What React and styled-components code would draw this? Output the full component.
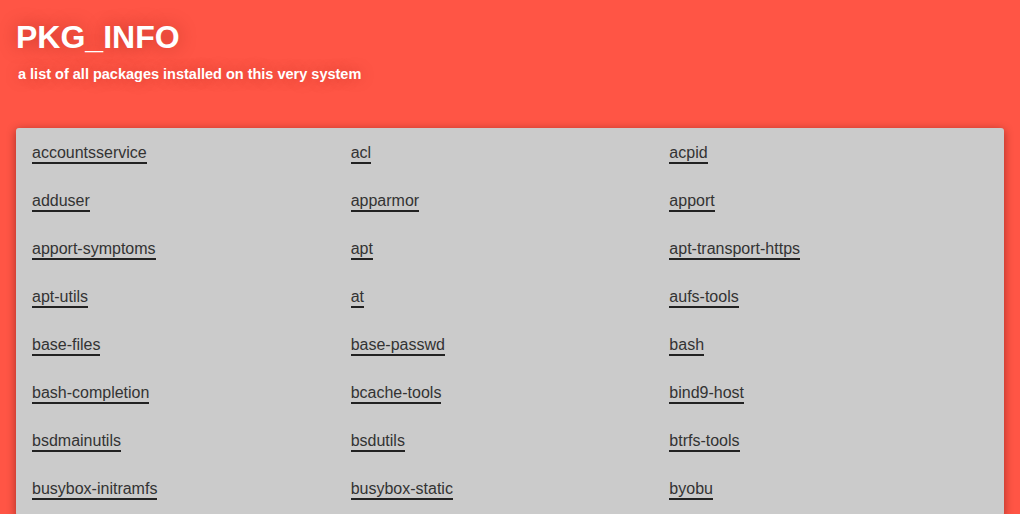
import React from "react";
import styled, { createGlobalStyle } from "styled-components";

// package list, as printed by dpkg
const packages = [
  "accountsservice", "acl", "acpid",
  "adduser", "apparmor", "apport",
  "apport-symptoms", "apt", "apt-transport-https",
  "apt-utils", "at", "aufs-tools",
  "base-files", "base-passwd", "bash",
  "bash-completion", "bcache-tools", "bind9-host",
  "bsdmainutils", "bsdutils", "btrfs-tools",
  "busybox-initramfs", "busybox-static", "byobu",
];

// styles
const GlobalStyle = createGlobalStyle`
  html, body {
    margin: 0;
    padding: 0;
    background: #ffffff;
  }
  body {
    font-family: "Liberation Sans", Arial, sans-serif;
  }
`;

const Page = styled.div`
  margin-right: 7px;
  min-height: 100vh;
  background: #ff5545;
  padding-bottom: 32px;
  box-sizing: border-box;
`;

const Header = styled.header`
  padding: 19px 16px 0 16px;
  height: 128px;
  box-sizing: border-box;
`;

const Title = styled.h1`
  margin: 0;
  font-size: 32px;
  line-height: 37px;
  font-weight: 700;
  color: #ffffff;
  text-shadow: 0 0 18px rgba(120, 20, 10, 0.45);
`;

const Subtitle = styled.p`
  margin: 10px 0 0 2px;
  font-size: 14.5px;
  line-height: 16px;
  font-weight: 700;
  color: #ffffff;
  text-shadow: 0 0 14px rgba(120, 20, 10, 0.35);
`;

const Card = styled.main`
  margin: 0 16px;
  padding: 16px;
  background: #cbcbcb;
  border-radius: 3px;
  box-shadow: 0 2px 10px rgba(60, 0, 0, 0.45);
  display: grid;
  grid-template-columns: repeat(3, 1fr);
  row-gap: 28px;
`;

const Cell = styled.div`
  min-width: 0;
`;

const PkgLink = styled.a`
  display: inline-block;
  font-size: 16px;
  line-height: 18px;
  color: #333333;
  text-decoration: none;
  border-bottom: 2px solid #222222;
  cursor: pointer;
`;

const App = () => {
  return (
    <>
      <GlobalStyle />
      <Page>
        <Header>
          <Title>PKG_INFO</Title>
          <Subtitle>a list of all packages installed on this very system</Subtitle>
        </Header>
        <Card>
          {packages.map((name) => (
            <Cell key={name}>
              <PkgLink>{name}</PkgLink>
            </Cell>
          ))}
        </Card>
      </Page>
    </>
  );
};

export default App;
